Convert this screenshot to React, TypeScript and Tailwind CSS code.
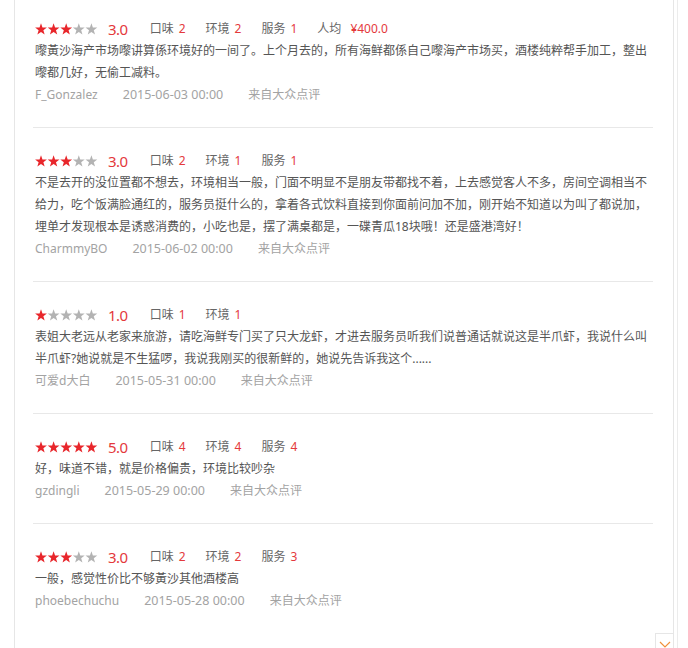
import React from "react";

type Review = {
  stars: number;
  score: string;
  items: [string, number][];
  price?: string;
  lines: string[];
  user: string;
  date: string;
};

const reviews: Review[] = [
  {
    stars: 3,
    score: "3.0",
    items: [
      ["口味", 2],
      ["环境", 2],
      ["服务", 1],
    ],
    price: "¥400.0",
    lines: [
      "嚟黃沙海产市场嚟讲算係环境好的一间了。上个月去的，所有海鲜都係自己嚟海产市场买，酒楼纯粹帮手加工，整出",
      "嚟都几好，无偷工减料。",
    ],
    user: "F_Gonzalez",
    date: "2015-06-03 00:00",
  },
  {
    stars: 3,
    score: "3.0",
    items: [
      ["口味", 2],
      ["环境", 1],
      ["服务", 1],
    ],
    lines: [
      "不是去开的没位置都不想去，环境相当一般，门面不明显不是朋友带都找不着，上去感觉客人不多，房间空调相当不",
      "给力，吃个饭满脸通红的，服务员挺什么的，拿着各式饮料直接到你面前问加不加，刚开始不知道以为叫了都说加，",
      "埋单才发现根本是诱惑消费的，小吃也是，摆了满桌都是，一碟青瓜18块哦！还是盛港湾好！",
    ],
    user: "CharmmyBO",
    date: "2015-06-02 00:00",
  },
  {
    stars: 1,
    score: "1.0",
    items: [
      ["口味", 1],
      ["环境", 1],
    ],
    lines: [
      "表姐大老远从老家来旅游，请吃海鲜专门买了只大龙虾，才进去服务员听我们说普通话就说这是半爪虾，我说什么叫",
      "半爪虾?她说就是不生猛啰，我说我刚买的很新鲜的，她说先告诉我这个......",
    ],
    user: "可爱d大白",
    date: "2015-05-31 00:00",
  },
  {
    stars: 5,
    score: "5.0",
    items: [
      ["口味", 4],
      ["环境", 4],
      ["服务", 4],
    ],
    lines: ["好，味道不错，就是价格偏贵，环境比较吵杂"],
    user: "gzdingli",
    date: "2015-05-29 00:00",
  },
  {
    stars: 3,
    score: "3.0",
    items: [
      ["口味", 2],
      ["环境", 2],
      ["服务", 3],
    ],
    lines: ["一般，感觉性价比不够黃沙其他酒楼高"],
    user: "phoebechuchu",
    date: "2015-05-28 00:00",
  },
];

const STAR =
  "6,0.3 7.47,4.48 11.9,4.58 8.38,7.27 9.64,11.52 6,9 2.36,11.52 3.62,7.27 0.1,4.58 4.53,4.48";

function Stars({ value }: { value: number }) {
  return (
    <svg width="63" height="12" viewBox="0 0 63 12" className="shrink-0">
      {[0, 1, 2, 3, 4].map((i) => (
        <polygon
          key={i}
          points={STAR}
          transform={`translate(${i * 12.6} 0)`}
          fill={i < value ? "#e8262b" : "#b3b3b3"}
        />
      ))}
    </svg>
  );
}

function ReviewItem({ r, first }: { r: Review; first: boolean }) {
  return (
    <div className={`${first ? "pt-[18px]" : "pt-[22px]"} pb-[21px] pl-[2px]`}>
      <div className="flex items-center h-[22px]">
        <Stars value={r.stars} />
        <span className="ml-[10px] mr-[22px] text-[15px] tracking-[-0.5px] text-[#e4393c]">
          {r.score}
        </span>
        {r.items.map(([label, n]) => (
          <span key={label} className="mr-[20px] text-[12px] text-[#666]">
            {label}
            <span className="ml-[5px] text-[#e4393c]">{n}</span>
          </span>
        ))}
        {r.price && (
          <span className="text-[12px] text-[#666]">
            人均
            <span className="ml-[9px] text-[#e4393c]">{r.price}</span>
          </span>
        )}
      </div>
      <p className="text-[12px] leading-[22px] text-[#555]">
        {r.lines.map((l, i) => (
          <React.Fragment key={i}>
            {l}
            {i < r.lines.length - 1 && <br />}
          </React.Fragment>
        ))}
      </p>
      <div className="flex h-[22px] items-center gap-[25px] text-[12px] text-[#a3a3a3]">
        <span>{r.user}</span>
        <span className="text-[12.5px]">{r.date}</span>
        <span>来自大众点评</span>
      </div>
    </div>
  );
}

export default function App() {
  return (
    <div
      className="h-[648px] overflow-hidden bg-white"
      style={{ fontFamily: '"Noto Sans", "Noto Sans CJK SC", sans-serif' }}
    >
      <div className="ml-[14px] w-[664px] h-full border-r border-[#ececec]">
        <div className="relative w-[660px] h-full border-l border-r border-[#e6e6e6]">
          <div className="ml-[18px] w-[620px]">
            {reviews.map((r, i) => (
              <div
                key={i}
                className={i < reviews.length - 1 ? "border-b border-[#e8e8e8]" : ""}
              >
                <ReviewItem r={r} first={i === 0} />
              </div>
            ))}
          </div>
          <div className="absolute right-0 bottom-0 w-[18px] h-[15px] border-l border-t border-[#e6e6e6] bg-white flex justify-center">
            <svg width="12" height="10" viewBox="0 0 12 10" className="mt-[7px]">
              <polyline points="1,1 6,6 11,1" fill="none" stroke="#f0903a" strokeWidth="1.2" />
            </svg>
          </div>
        </div>
      </div>
    </div>
  );
}
